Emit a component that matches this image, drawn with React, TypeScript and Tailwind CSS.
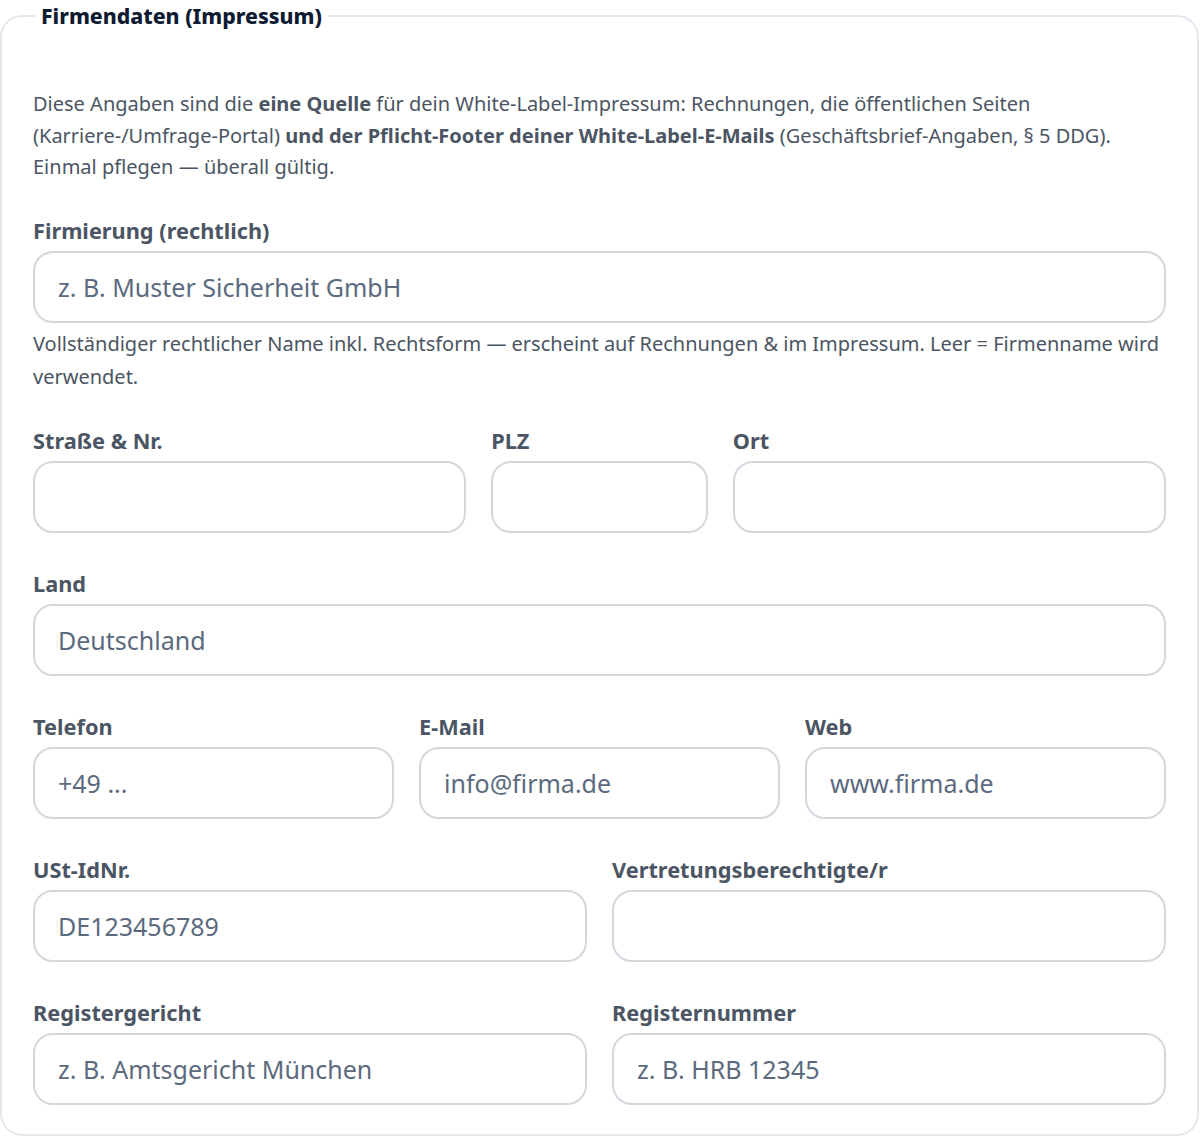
import React from 'react';

const font = { fontFamily: '"Noto Sans", "Open Sans", Arial, sans-serif' };

function Field({ label, placeholder, className = '' }: { label: string; placeholder?: string; className?: string }) {
  return (
    <label className={`flex flex-col ${className}`}>
      <span className="text-[21.75px] leading-[30px] font-bold text-[#4b5563] mb-[5px]">{label}</span>
      <input
        type="text"
        placeholder={placeholder}
        className="h-[72px] w-full rounded-[20px] border-2 border-[#d4d7dd] bg-white px-[23px] text-[25px] text-[#334155] placeholder:text-[#5b6a7e] outline-none"
      />
    </label>
  );
}

export default function App() {
  return (
    <div className="bg-white w-[1200px] min-h-[1138px]" style={font}>
      <fieldset className="w-[1199px] rounded-[22px] border-2 border-[#e4e7ee] px-[31px] pb-[29px] pt-[56px]">
        <legend className="ml-[2px] px-[6px] text-[21.25px] leading-[32px] font-extrabold text-[#0f1b33]">Firmendaten (Impressum)</legend>

        <p className="text-[20px] leading-[31.5px] text-[#4b5563]">
          Diese Angaben sind die <strong className="font-bold">eine Quelle</strong> für dein White-Label-Impressum: Rechnungen, die öffentlichen Seiten (Karriere-/Umfrage-Portal) <strong className="font-bold">und der Pflicht-Footer deiner White-Label-E-Mails</strong> (Geschäftsbrief-Angaben, § 5 DDG). Einmal pflegen — überall gültig.
        </p>

        <div className="mt-[33px]">
          <Field label="Firmierung (rechtlich)" placeholder="z. B. Muster Sicherheit GmbH" />
          <p className="mt-[4px] text-[20px] leading-[33px] text-[#4b5563]">
            Vollständiger rechtlicher Name inkl. Rechtsform — erscheint auf Rechnungen &amp; im Impressum. Leer = Firmenname wird verwendet.
          </p>
        </div>

        <div className="mt-[33px] grid grid-cols-[2fr_1fr_2fr] gap-[25px]">
          <Field label="Straße & Nr." />
          <Field label="PLZ" />
          <Field label="Ort" />
        </div>

        <Field className="mt-[36px]" label="Land" placeholder="Deutschland" />

        <div className="mt-[36px] grid grid-cols-3 gap-[25px]">
          <Field label="Telefon" placeholder="+49 ..." />
          <Field label="E-Mail" placeholder="info@firma.de" />
          <Field label="Web" placeholder="www.firma.de" />
        </div>

        <div className="mt-[36px] grid grid-cols-2 gap-[25px]">
          <Field label="USt-IdNr." placeholder="DE123456789" />
          <Field label="Vertretungsberechtigte/r" />
        </div>

        <div className="mt-[36px] grid grid-cols-2 gap-[25px]">
          <Field label="Registergericht" placeholder="z. B. Amtsgericht München" />
          <Field label="Registernummer" placeholder="z. B. HRB 12345" />
        </div>
      </fieldset>
    </div>
  );
}
